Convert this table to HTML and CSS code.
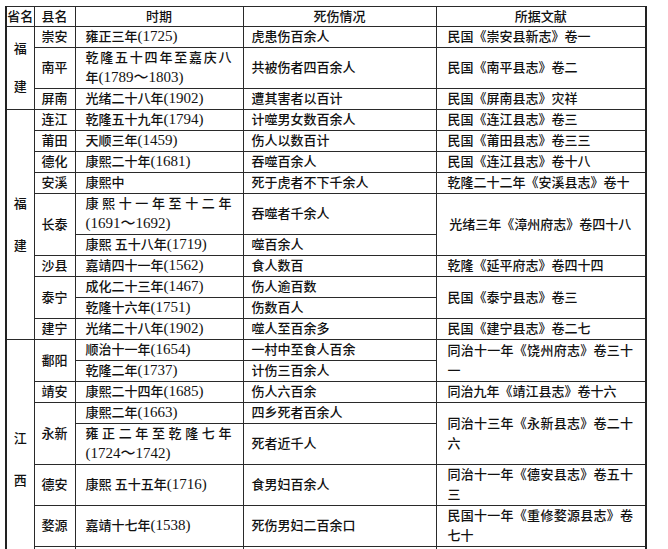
FILE: index.html
```html
<!DOCTYPE html>
<html lang="zh-CN">
<head>
<meta charset="utf-8">
<title>虎患表</title>
<link rel="stylesheet" href="styles.css">
</head>
<body>
<table class="tbl">
  <colgroup>
    <col class="c1"><col class="c2"><col class="c3"><col class="c4"><col class="c5">
  </colgroup>
  <tr class="hd">
    <th class="pv">省名</th><th>县名</th><th>时期</th><th>死伤情况</th><th>所据文献</th>
  </tr>

  <tr>
    <td class="pv" rowspan="3"><div class="pw g18"><span>福</span><span>建</span></div></td>
    <td class="ct">崇安</td>
    <td class="tm">雍正三年<span class="n">(1725)</span></td>
    <td class="dt">虎患伤百余人</td>
    <td class="src">民国《崇安县新志》卷一</td>
  </tr>
  <tr>
    <td class="ct">南平</td>
    <td class="tm"><span class="jl">乾隆五十四年至嘉庆八</span>年<span class="n">(1789～1803)</span></td>
    <td class="dt">共被伤者四百余人</td>
    <td class="src">民国《南平县志》卷二</td>
  </tr>
  <tr>
    <td class="ct">屏南</td>
    <td class="tm">光绪二十八年<span class="n">(1902)</span></td>
    <td class="dt">遭其害者以百计</td>
    <td class="src">民国《屏南县志》灾祥</td>
  </tr>

  <tr>
    <td class="pv" rowspan="10"><div class="pw g22"><span>福</span><span>建</span></div></td>
    <td class="ct">连江</td>
    <td class="tm">乾隆五十九年<span class="n">(1794)</span></td>
    <td class="dt">计噬男女数百余人</td>
    <td class="src">民国《连江县志》卷三</td>
  </tr>
  <tr>
    <td class="ct">莆田</td>
    <td class="tm">天顺三年<span class="n">(1459)</span></td>
    <td class="dt">伤人以数百计</td>
    <td class="src">民国《莆田县志》卷三三</td>
  </tr>
  <tr>
    <td class="ct">德化</td>
    <td class="tm">康熙二十年<span class="n">(1681)</span></td>
    <td class="dt">吞噬百余人</td>
    <td class="src">民国《连江县志》卷十八</td>
  </tr>
  <tr>
    <td class="ct">安溪</td>
    <td class="tm">康熙中</td>
    <td class="dt">死于虎者不下千余人</td>
    <td class="src">乾隆二十二年《安溪县志》卷十</td>
  </tr>
  <tr>
    <td class="ct" rowspan="2">长泰</td>
    <td class="tm"><span class="jl">康熙十一年至十二年</span><span class="n">(1691～1692)</span></td>
    <td class="dt">吞噬者千余人</td>
    <td class="src mid" rowspan="2">光绪三年《漳州府志》卷四十八</td>
  </tr>
  <tr>
    <td class="tm">康熙 五十八年<span class="n">(1719)</span></td>
    <td class="dt">噬百余人</td>
  </tr>
  <tr>
    <td class="ct">沙县</td>
    <td class="tm">嘉靖四十一年<span class="n">(1562)</span></td>
    <td class="dt">食人数百</td>
    <td class="src">乾隆《延平府志》卷四十四</td>
  </tr>
  <tr>
    <td class="ct" rowspan="2">泰宁</td>
    <td class="tm">成化二十三年<span class="n">(1467)</span></td>
    <td class="dt">伤人逾百数</td>
    <td class="src" rowspan="2">民国《泰宁县志》卷三</td>
  </tr>
  <tr>
    <td class="tm">乾隆十六年<span class="n">(1751)</span></td>
    <td class="dt">伤数百人</td>
  </tr>
  <tr>
    <td class="ct">建宁</td>
    <td class="tm">光绪二十八年<span class="n">(1902)</span></td>
    <td class="dt">噬人至百余多</td>
    <td class="src">民国《建宁县志》卷二七</td>
  </tr>

  <tr>
    <td class="pv top" rowspan="8"><div class="pw g22"><span>江</span><span>西</span></div></td>
    <td class="ct" rowspan="2">鄱阳</td>
    <td class="tm">顺治十一年<span class="n">(1654)</span></td>
    <td class="dt">一村中至食人百余</td>
    <td class="src" rowspan="2"><span class="jl">同治十一年《饶州府志》卷三十</span>一</td>
  </tr>
  <tr>
    <td class="tm">乾隆二年<span class="n">(1737)</span></td>
    <td class="dt">计伤三百余人</td>
  </tr>
  <tr>
    <td class="ct">靖安</td>
    <td class="tm">康熙二十四年<span class="n">(1685)</span></td>
    <td class="dt">伤人六百余</td>
    <td class="src">同治九年《靖江县志》卷十六</td>
  </tr>
  <tr>
    <td class="ct" rowspan="2">永新</td>
    <td class="tm">康熙二年<span class="n">(1663)</span></td>
    <td class="dt">四乡死者百余人</td>
    <td class="src" rowspan="2"><span class="jl">同治十三年《永新县志》卷二十</span>六</td>
  </tr>
  <tr>
    <td class="tm"><span class="jl">雍正二年至乾隆七年</span><span class="n">(1724～1742)</span></td>
    <td class="dt">死者近千人</td>
  </tr>
  <tr>
    <td class="ct">德安</td>
    <td class="tm">康熙 五十五年<span class="n">(1716)</span></td>
    <td class="dt">食男妇百余人</td>
    <td class="src"><span class="jl">同治十一年《德安县志》卷五十</span>三</td>
  </tr>
  <tr>
    <td class="ct">婺源</td>
    <td class="tm">嘉靖十七年<span class="n">(1538)</span></td>
    <td class="dt">死伤男妇二百余口</td>
    <td class="src"><span class="jl">民国十一年《重修婺源县志》卷</span>七十</td>
  </tr>
  <tr class="more">
    <td class="ct">&nbsp;</td><td class="tm">&nbsp;</td><td class="dt">&nbsp;</td><td class="src">&nbsp;</td>
  </tr>
</table>
</body>
</html>
```

FILE: styles.css
```css
html, body {
  margin: 0;
  padding: 0;
  background: #ffffff;
}

body {
  font-family: "Liberation Serif", "Noto Sans CJK SC", serif;
  font-size: 13px;
  color: #111111;
}

.tbl {
  margin: 6px 0 0 5px;
  border-collapse: collapse;
  table-layout: fixed;
  width: 641px;
  border-top: 1px solid #222222;
  border-left: 2px solid #222222;
  border-right: 2px solid #222222;
}

.c1 { width: 28px; }
.c2 { width: 41px; }
.c3 { width: 168px; }
.c4 { width: 193px; }
.c5 { width: 210px; }

.tbl th,
.tbl td {
  border: 1px solid #2a2a2a;
  line-height: 20px;
  padding: 0;
  vertical-align: middle;
  font-weight: 500;
  white-space: normal;
}

.tbl th {
  text-align: center;
}

.hd th {
  line-height: 19px;
}

.pv {
  text-align: center;
}

.pv.top {
  vertical-align: top;
}

.pw {
  display: flex;
  flex-direction: column;
  align-items: center;
}

.g18 { gap: 18px; }
.g22 { gap: 22px; }

.pv.top .pw {
  padding-top: 89px;
}

.ct {
  text-align: center;
}

.tm {
  padding: 0 11px 0 10px !important;
  text-align: left;
}

.dt {
  padding: 0 6px 0 8px !important;
  text-align: left;
}

.src {
  padding: 0 12px 0 11px !important;
  text-align: left;
}

.src.mid {
  text-align: center;
}

.n {
  font-size: 15px;
  line-height: 1;
}

.jl {
  display: block;
  text-align: justify;
  text-align-last: justify;
}
```
